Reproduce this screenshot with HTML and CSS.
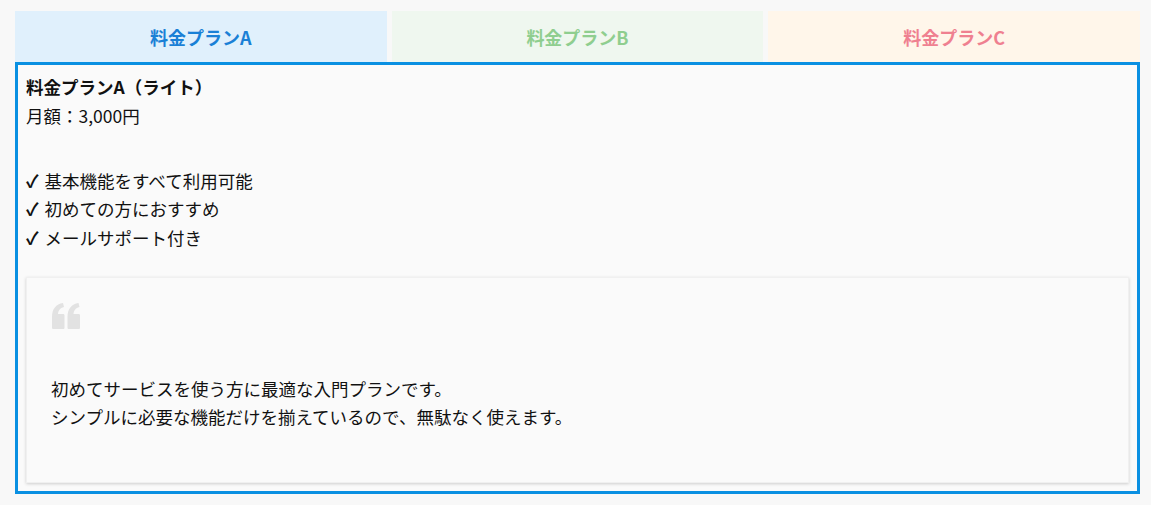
FILE: index.html
```html
<!DOCTYPE html>
<html lang="ja">

<head>
    <meta charset="UTF-8">
    <meta name="viewport" content="width=device-width, initial-scale=1.0">
    <title>料金プラン</title>
    <link rel="stylesheet" href="styles.css">
</head>

<body>
    <div class="plans">
        <div class="tabs">
            <div class="tab tab-a">料金プランA</div>
            <div class="tab tab-b">料金プランB</div>
            <div class="tab tab-c">料金プランC</div>
        </div>

        <div class="panel">
            <p class="lead">
                <strong>料金プランA（ライト）</strong><br>
                月額：3,000円
            </p>
            <ul class="features">
                <li><span class="check">✓</span> 基本機能をすべて利用可能</li>
                <li><span class="check">✓</span> 初めての方におすすめ</li>
                <li><span class="check">✓</span> メールサポート付き</li>
            </ul>

            <blockquote class="quote">
                <svg class="quote-icon" width="30" height="26" viewBox="0 0 30 26">
                    <path d="M1 14 C1 6 5 1 12 0 L13 4 C9 5 7 8 7 11 L12 11 C13 11 13.5 11.5 13.5 12.5 L13.5 24.5 C13.5 25.5 13 26 12 26 L2.5 26 C1.5 26 1 25.5 1 24.5 Z" fill="#e2e2e2" />
                    <path d="M16.5 14 C16.5 6 20.5 1 27.5 0 L28.5 4 C24.5 5 22.5 8 22.5 11 L27.5 11 C28.5 11 29 11.5 29 12.5 L29 24.5 C29 25.5 28.5 26 27.5 26 L18 26 C17 26 16.5 25.5 16.5 24.5 Z" fill="#e2e2e2" />
                </svg>
                <p>
                    初めてサービスを使う方に最適な入門プランです。<br>
                    シンプルに必要な機能だけを揃えているので、無駄なく使えます。
                </p>
            </blockquote>
        </div>
    </div>
</body>

</html>
```

FILE: styles.css
```css
* {
    margin: 0;
    padding: 0;
    box-sizing: border-box;
}

body {
    background: #f8f8f8;
    font-family: "Noto Sans CJK JP", "Noto Sans", sans-serif;
    font-size: 17.5px;
    color: #111;
    padding: 11px 11px 0 15px;
}

.tabs {
    display: flex;
    gap: 5px;
}

.tab {
    flex: 1;
    height: 51px;
    display: flex;
    justify-content: center;
    align-items: center;
    font-weight: bold;
    font-size: 18px;
}

.tab-a {
    background: #e0f0fc;
    color: #1a80d6;
}

.tab-b {
    background: #eff7ef;
    color: #8fce8f;
}

.tab-c {
    background: #fff6ea;
    color: #ef8090;
}

.panel {
    background: #fafafa;
    border: 3px solid #0a90e2;
    padding: 8px;
    line-height: 28.8px;
}

.lead strong {
    font-weight: bold;
}

.features {
    list-style: none;
    margin-top: 36px;
}

.check {
    font-weight: bold;
    margin-right: 2px;
}

.quote {
    margin-top: 24px;
    background: #fafafa;
    border: 1px solid #f0f0f0;
    box-shadow: 0 1px 3px rgba(0, 0, 0, 0.18);
    padding: 25px 24px 51px;
}

.quote-icon {
    display: block;
    margin-bottom: 46px;
}

.quote p {
    line-height: 28px;
}
```
